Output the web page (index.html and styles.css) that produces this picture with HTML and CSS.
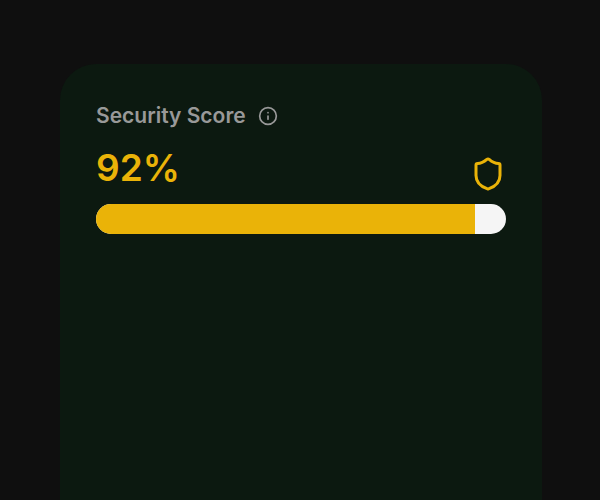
FILE: index.html
```
<!DOCTYPE html>
<html lang="en">
<head>
<meta charset="utf-8">
<title>Security Score</title>
<link rel="stylesheet" href="styles.css">
</head>
<body>
<main class="page">
  <section class="card">
    <div class="card-title">
      <h1 class="label" id="score-label">Security Score</h1>
      <svg class="info-icon" viewBox="0 0 24 24" aria-hidden="true"><circle cx="12" cy="12" r="10"/><path d="M12 16v-4M12 8h.01"/></svg>
    </div>
    <div class="score-row">
      <p class="score">92%</p>
      <svg class="shield-icon" viewBox="0 0 24 24" aria-hidden="true"><path d="M20 13c0 5-3.5 7.5-7.66 8.95a1 1 0 0 1-.67-.01C7.5 20.5 4 18 4 13V6a1 1 0 0 1 1-1c2 0 4.5-1.2 6.24-2.72a1.17 1.17 0 0 1 1.52 0C14.51 3.81 17 5 19 5a1 1 0 0 1 1 1z"/></svg>
    </div>
    <div class="track" role="progressbar" aria-labelledby="score-label" aria-valuemin="0" aria-valuemax="100" aria-valuenow="92">
      <div class="fill" style="width: 92.4%"></div>
    </div>
  </section>
</main>
</body>
</html>
```
FILE: styles.css
```
* {
  box-sizing: border-box;
}

body {
  margin: 0;
  background: #0f0f0f;
  font-family: Inter, "Liberation Sans", sans-serif;
}

.page {
  display: flex;
  min-height: 100vh;
  padding: 64px 58px 0 60px;
}

.card {
  flex: 1;
  padding: 36px;
  border-radius: 36px 36px 0 0;
  background: #0c1910;
}

.card-title {
  display: flex;
  align-items: center;
  gap: 12px;
}

.label {
  margin: 0;
  color: #999999;
  font-size: 21px;
  font-weight: 600;
  line-height: 32px;
}

.info-icon {
  width: 20px;
  height: 20px;
  fill: none;
  stroke: #999999;
  stroke-width: 2;
  stroke-linecap: round;
  stroke-linejoin: round;
}

.score-row {
  display: flex;
  align-items: flex-end;
  justify-content: space-between;
  height: 60px;
  margin-bottom: 12px;
}

.score {
  align-self: flex-start;
  margin: 0;
  color: #eab308;
  font-size: 37px;
  font-weight: 600;
  line-height: 72px;
}

.shield-icon {
  width: 36px;
  height: 36px;
  fill: none;
  stroke: #eab308;
  stroke-width: 2;
  stroke-linecap: round;
  stroke-linejoin: round;
}

.track {
  height: 30px;
  overflow: hidden;
  border-radius: 15px;
  background: #f5f5f5;
}

.fill {
  height: 100%;
  background: #eab308;
}
```
